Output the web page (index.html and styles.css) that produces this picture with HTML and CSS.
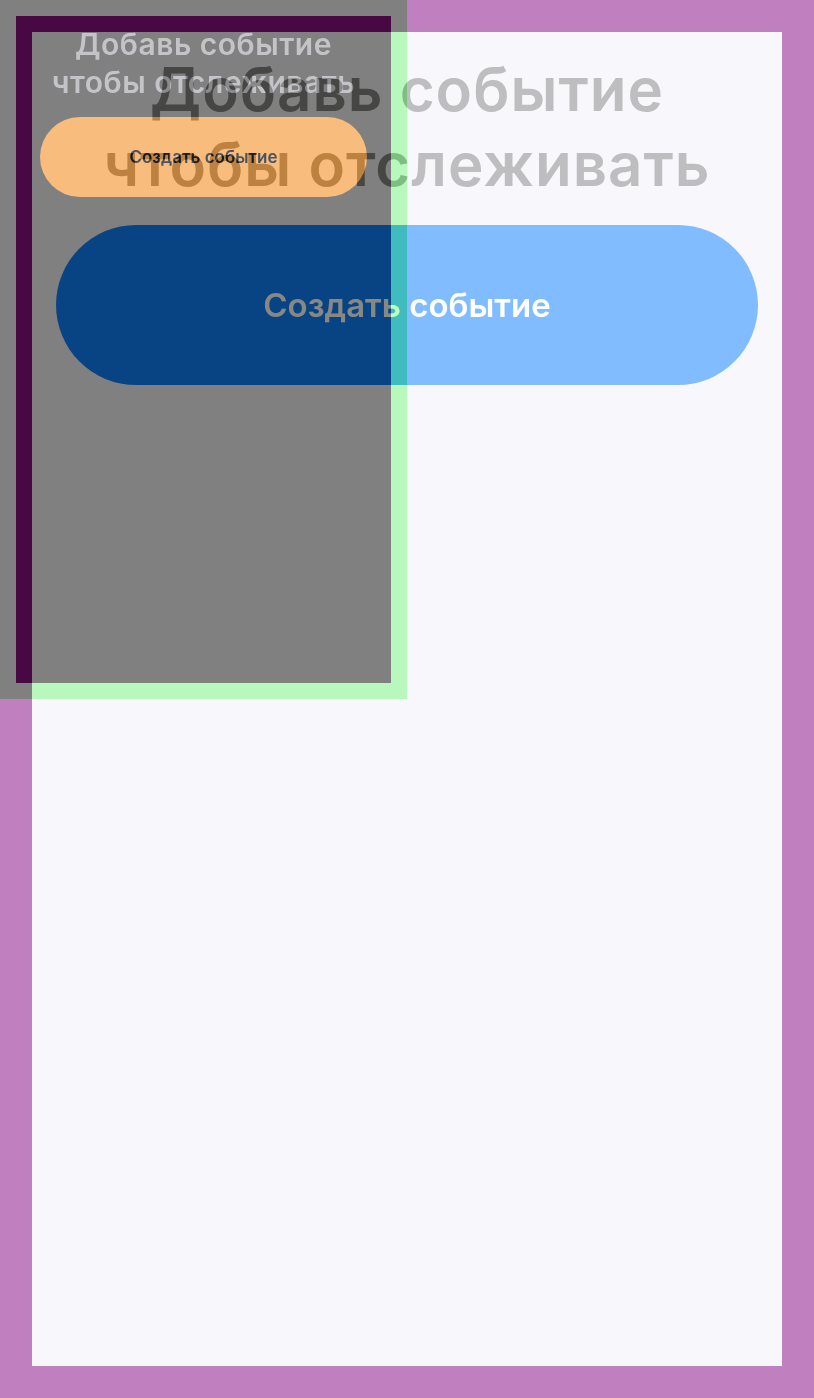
FILE: index.html
```html
<!DOCTYPE html>
<html lang="ru">
<head>
<meta charset="utf-8">
<title>Добавь событие</title>
<link rel="stylesheet" href="styles.css">
</head>
<body>
<div class="screen">
  <div class="panel">
    <h1 class="title">Добавь событие<br>чтобы отслеживать</h1>
    <button class="cta">Создать событие</button>
  </div>
  <div class="overlay">
    <div class="mini-panel">
      <h1 class="mini-title">Добавь событие<br>чтобы отслеживать</h1>
      <button class="mini-cta">Создать событие</button>
    </div>
  </div>
</div>
</body>
</html>
```

FILE: styles.css
```css
html, body {
  margin: 0;
  padding: 0;
}
body {
  width: 814px;
  height: 1398px;
  overflow: hidden;
  font-family: Inter, "Noto Sans", "DejaVu Sans", sans-serif;
}
.screen {
  position: relative;
  isolation: isolate;
  width: 814px;
  height: 1398px;
  box-sizing: border-box;
  padding: 32px;
  background: #c080c0;
}
.panel {
  height: 100%;
  box-sizing: border-box;
  background: #f8f8fc;
  padding: 20px 24px 0;
  display: flex;
  flex-direction: column;
  align-items: stretch;
  text-align: center;
}
.title {
  margin: 0;
  font-size: 60px;
  line-height: 75px;
  font-weight: 600;
  color: #bebec0;
  letter-spacing: 1px;
  white-space: nowrap;
}
.cta {
  margin-top: 23px;
  height: 160px;
  border: none;
  border-radius: 80px;
  background: #80bcff;
  color: #ffffff;
  font-family: inherit;
  font-size: 33px;
  font-weight: 600;
}
.overlay {
  position: absolute;
  left: 0;
  top: 0;
  width: 407px;
  height: 699px;
  box-sizing: border-box;
  padding: 16px;
  background: #400040;
  mix-blend-mode: difference;
}
.mini-panel {
  height: 100%;
  box-sizing: border-box;
  background: #78787c;
  padding: 10px 24px 0;
  display: flex;
  flex-direction: column;
  align-items: stretch;
  text-align: center;
}
.mini-title {
  margin: 0;
  font-size: 30px;
  line-height: 37.5px;
  font-weight: 600;
  color: #343434;
  letter-spacing: 0.5px;
  white-space: nowrap;
}
.mini-cta {
  margin-top: 16px;
  height: 80px;
  border: none;
  border-radius: 40px;
  background: #003c80;
  color: #aca49c;
  font-family: inherit;
  font-size: 17px;
  font-weight: 600;
}
```
